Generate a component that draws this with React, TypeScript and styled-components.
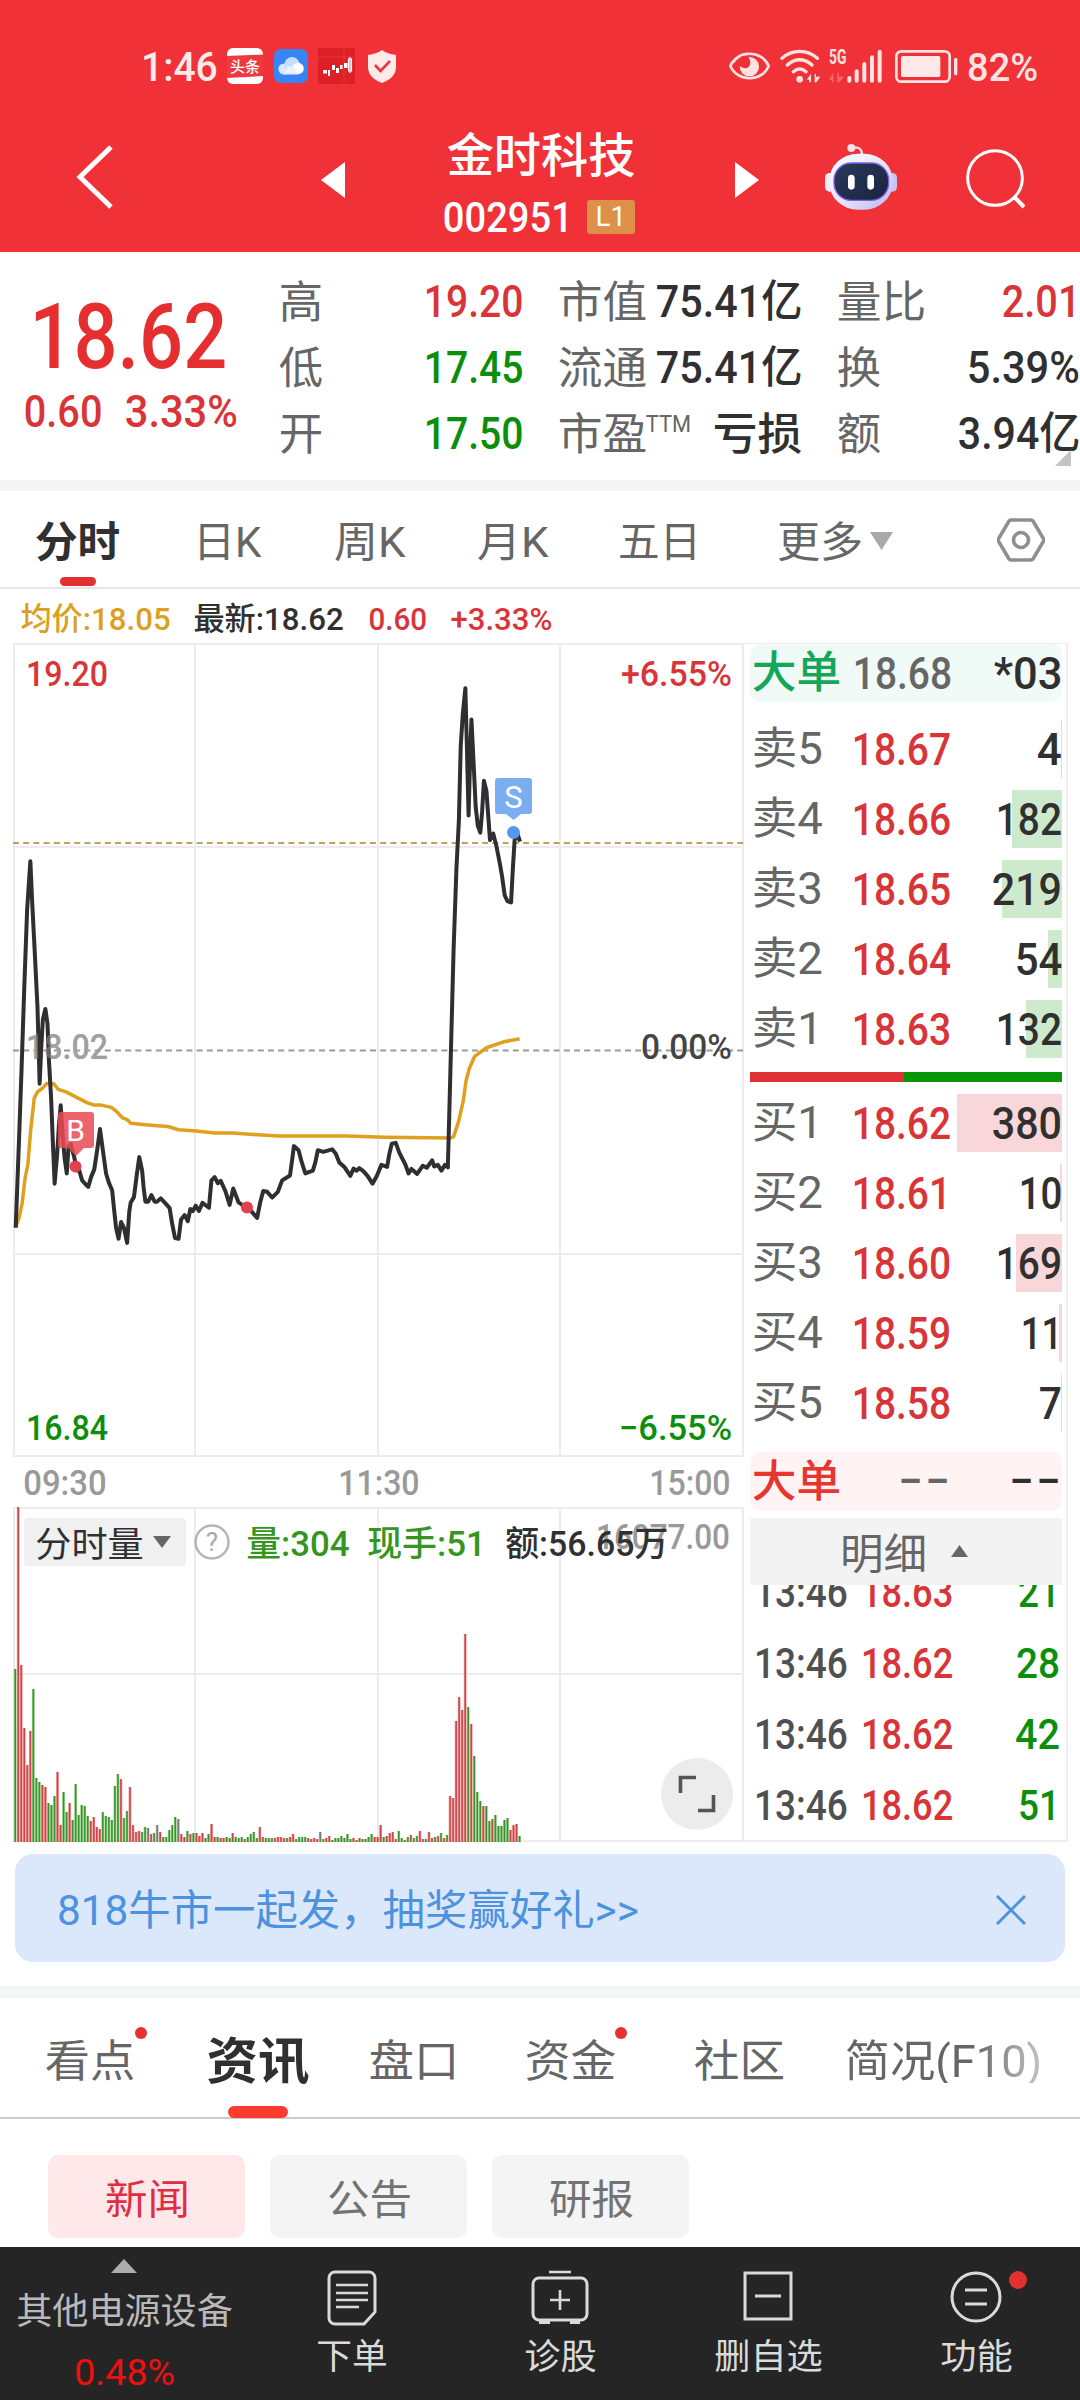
import React, { useLayoutEffect, useRef, useState } from "react";
import styled, { createGlobalStyle, css } from "styled-components";

const RED = "#d93438";
const GREEN = "#0b8f0b";
const DARK = "#303030";
const GREY = "#666666";

const Global = createGlobalStyle`
  * { box-sizing: border-box; }
  body { margin: 0; background: #fff; }
  svg { display: block; flex: none; }
`;

/* ---------- text fitted to the width of the condensed display face ---------- */

const FitBox = styled.span<{ $w: number; $ml: number; $size: number; $c: string; $wt: number; $dy: number }>`
  display: block;
  flex: none;
  width: ${(p) => p.$w}px;
  height: ${(p) => p.$size}px;
  margin-left: ${(p) => p.$ml}px;
  padding-top: ${(p) => p.$dy}px;
  font-family: Roboto, "Noto Sans CJK SC", sans-serif;
  font-size: ${(p) => p.$size}px;
  line-height: ${(p) => p.$size}px;
  font-weight: ${(p) => p.$wt};
  color: ${(p) => p.$c};
`;
const FitInner = styled.span`
  display: inline-block;
  white-space: pre;
  vertical-align: top;
  transform-origin: 0 50%;
`;

type FitProps = {
  w: number;
  s: number;
  c?: string;
  wt?: number;
  ml?: number;
  dy?: number;
  children: string;
};

function Fit({ w, s, c = DARK, wt = 400, ml = 0, dy = 0, children }: FitProps) {
  const ref = useRef<HTMLSpanElement>(null);
  const [k, setK] = useState(1);
  const pad = s * 0.05;
  useLayoutEffect(() => {
    if (ref.current) setK((w + pad * 2) / ref.current.offsetWidth);
  }, [w, pad, children]);
  return (
    <FitBox $w={w} $ml={ml} $size={s} $c={c} $wt={wt} $dy={dy}>
      <FitInner ref={ref} style={{ transform: `translateX(${-pad}px) scaleX(${k})` }}>
        {children}
      </FitInner>
    </FitBox>
  );
}

/* ---------- layout parts ---------- */

const Page = styled.div`
  width: 1080px;
  height: 2400px;
  display: flex;
  flex-direction: column;
  overflow: hidden;
  background: #fff;
`;
const Header = styled.header`
  height: 252px;
  background: #f03238;
`;
const StatusBar = styled.div`
  height: 132px;
  display: flex;
  align-items: center;
  justify-content: space-between;
  padding: 0 44px 0 143px;
`;
const StatusGroup = styled.div`
  display: flex;
  align-items: center;
`;
const NavBar = styled.nav`
  height: 120px;
  padding: 0 54px 0 76px;
  display: flex;
  align-items: flex-start;
`;
const NavIcon = styled.div<{ $ml: number; $top: number }>`
  margin: ${(p) => p.$top}px 0 0 ${(p) => p.$ml}px;
`;
const TitleBlock = styled.div`
  width: 390px;
  display: flex;
  flex-direction: column;
  align-items: center;
`;
const CodeRow = styled.div`
  display: flex;
  align-items: center;
  margin-top: 19px;
  height: 38px;
`;
const Badge = styled.div`
  display: flex;
  align-items: center;
  width: 48px;
  height: 34px;
  margin-left: 16px;
  background: #de904a;
  border-radius: 3px;
`;

const Quote = styled.section`
  height: 228px;
  display: flex;
  align-items: flex-start;
  position: relative;
`;
const PriceBlock = styled.div`
  width: 281px;
  padding-top: 39px;
`;
const SubPrice = styled.div`
  display: flex;
  margin-top: 9px;
`;
const StatCol = styled.div<{ $w: number; $ml: number }>`
  flex: none;
  width: ${(p) => p.$w}px;
  margin-left: ${(p) => p.$ml}px;
  padding-top: 16px;
`;
const StatRow = styled.div`
  height: 66px;
  display: flex;
  align-items: center;
  justify-content: space-between;
`;
const StatLabel = styled.div`
  display: flex;
  align-items: center;
`;
const Sup = styled.div`
  padding-bottom: 18px;
  margin-left: 2px;
`;
const Fold = styled.i`
  position: absolute;
  right: 9px;
  bottom: 14px;
  width: 16px;
  height: 16px;
  background: #c4c4c4;
  clip-path: polygon(100% 0, 100% 100%, 0 100%);
`;
const Band = styled.div<{ $h: number }>`
  flex: none;
  height: ${(p) => p.$h}px;
  background: #f4f5f5;
`;

const PeriodTabs = styled.div`
  height: 98px;
  border-bottom: 2px solid #e8e8e8;
  display: flex;
  align-items: center;
  padding: 6px 0 0 37px;
`;
const ActiveTab = styled.div<{ $w: number; $h: number; $drop: number; $bg: string; $x: number }>`
  position: relative;
  &::after {
    content: "";
    position: absolute;
    left: ${(p) => p.$x}px;
    top: ${(p) => p.$drop}px;
    width: ${(p) => p.$w}px;
    height: ${(p) => p.$h}px;
    border-radius: ${(p) => p.$h / 2}px;
    background: ${(p) => p.$bg};
  }
`;
const InfoRow = styled.div`
  height: 54px;
  display: flex;
  align-items: center;
  padding: 6px 0 0 21px;
`;

const Market = styled.section`
  height: 1199px;
  display: flex;
  padding-left: 13px;
`;
const ChartCol = styled.div`
  width: 731px;
`;
const TimeAxis = styled.div`
  height: 50px;
  display: flex;
  align-items: center;
  padding: 2px 0 0 12px;
`;
const VolumePane = styled.div`
  position: relative;
  height: 335px;
`;
const VolumeHead = styled.div`
  position: absolute;
  left: 11px;
  top: 11px;
  height: 48px;
  display: flex;
  align-items: center;
`;
const Picker = styled.div`
  width: 162px;
  height: 48px;
  padding-left: 13px;
  display: flex;
  align-items: center;
  background: #f0f0f0;
  border-radius: 4px;
`;
const ExpandButton = styled.div`
  position: absolute;
  left: 648px;
  top: 251px;
  width: 72px;
  height: 72px;
  border-radius: 50%;
  background: #ececec;
  display: flex;
  align-items: center;
  justify-content: center;
`;

const Book = styled.div`
  width: 324px;
  border: 2px solid #eeeeee;
  border-left: 0;
  border-top-width: 1px;
  padding-left: 6px;
  padding-right: 4px;
  display: flex;
  flex-direction: column;
`;
const cells = css`
  display: flex;
  align-items: center;
  padding-left: 4px;
`;
const BigOrder = styled.div<{ $bg: string; $h: number }>`
  ${cells}
  flex: none;
  height: ${(p) => p.$h}px;
  background: ${(p) => p.$bg};
  border-radius: 10px;
`;
const Level = styled.div`
  ${cells}
  flex: none;
  position: relative;
  height: 70px;
`;
const Depth = styled.i<{ $w: number; $bg: string }>`
  position: absolute;
  right: 0;
  top: 6px;
  height: 58px;
  width: ${(p) => p.$w}px;
  background: ${(p) => p.$bg};
`;
const Right = styled.div<{ $pad?: number }>`
  position: relative;
  flex: 1;
  display: flex;
  justify-content: flex-end;
  padding-right: ${(p) => p.$pad ?? 2}px;
`;
const SellSide = styled.div`
  padding-top: 12px;
`;
const BuySide = styled.div`
  padding: 5px 0 14px;
`;
const Ratio = styled.div`
  flex: none;
  display: flex;
  height: 10px;
  margin-top: 8px;
  margin-bottom: 1px;
  background: #069606;
  &::before {
    content: "";
    width: 49.4%;
    background: #e03035;
  }
`;
const DetailBar = styled.div`
  flex: none;
  height: 67px;
  margin-top: 7px;
  background: #f3f3f4;
  display: flex;
  align-items: center;
  padding: 6px 0 0 92px;
`;
const Ticks = styled.div`
  height: 254px;
  overflow: hidden;
`;
const TickList = styled.div`
  margin-top: -28px;
`;
const Tick = styled.div`
  ${cells}
  padding-left: 6px;
  height: 71px;
`;

const BannerWrap = styled.div`
  height: 144px;
  padding: 12px 15px 0;
`;
const Banner = styled.div`
  height: 108px;
  border-radius: 18px;
  background: #dbe8fb;
  display: flex;
  align-items: center;
  justify-content: space-between;
  padding: 4px 39px 0 43px;
`;
const NewsTabs = styled.div`
  height: 121px;
  border-bottom: 2px solid #cbcbcb;
  display: flex;
  align-items: center;
  padding: 6px 0 0 47px;
`;
const Dotted = styled.div<{ $x: number; $y: number; $d: number }>`
  position: relative;
  &::after {
    content: "";
    position: absolute;
    left: ${(p) => p.$x}px;
    top: ${(p) => p.$y}px;
    width: ${(p) => p.$d}px;
    height: ${(p) => p.$d}px;
    border-radius: 50%;
    background: #e2312f;
  }
`;
const Faded = styled.div`
  mask-image: linear-gradient(90deg, #000 65%, rgba(0, 0, 0, 0.4));
`;
const Chips = styled.div`
  height: 128px;
  display: flex;
  gap: 25px;
  padding: 36px 0 0 48px;
`;
const Chip = styled.div<{ $on?: boolean }>`
  width: 197px;
  height: 83px;
  padding-top: 6px;
  border-radius: 10px;
  display: flex;
  align-items: center;
  justify-content: center;
  background: ${(p) => (p.$on ? "#fee8ea" : "#f4f4f4")};
`;
const BottomBar = styled.footer`
  flex: none;
  height: 153px;
  background: #252525;
  display: flex;
`;
const Sector = styled.div`
  width: 248px;
  padding-top: 12px;
  display: flex;
  flex-direction: column;
  align-items: center;
`;
const Action = styled.div<{ $w: number }>`
  width: ${(p) => p.$w}px;
  padding-top: 23px;
  display: flex;
  flex-direction: column;
  align-items: center;
`;
const ActionIcon = styled.div`
  height: 70px;
`;

/* ---------- data ---------- */

const volume =
  "173g 335r 177r 114r 77r 111r 153g 64g 60g 57r 55r 39g 37g 46g 70r 17r 50g 30g 39r 22g 58g 27g 37g 36g 26g 21r 25r 15r 13r 30g 26g 25g 22g 56g 68g 63r 24g 31g 55r 17r 10r 11r 10g 15g 14x 8r 9g 17x 10r 5g 5g 12g 17g 25g 23x 8r 5r 11g 8r 9g 9r 6r 9r 4g 8g 18r 5r 5g 4r 4r 5g 4g 9r 5g 4g 5g 3r 5g 8g 10g 4g 15r 5r 4g 4g 4g 4r 5r 5r 4r 4g 5r 8r 3g 5g 5g 5g 4r 3r 4r 3r 10x 3g 4r 6r 2g 4g 4g 6g 4g 8g 3g 4r 2g 4r 3g 3g 5g 8g 5r 5r 17r 5g 6r 9r 10r 3r 11g 4g 2g 5g 7r 4g 6g 11r 3r 3g 10r 4r 5g 6r 9g 4r 7g 46r 44r 121r 145r 132r 208r 135g 118r 86g 50g 41g 36r 36g 21g 23r 27g 16g 16g 22g 24g 12r 17r 18r 6g"
    .split(" ")
    .map((t) => ({ h: parseInt(t, 10), k: t.slice(-1) }));

const barColor: Record<string, [string, string]> = {
  g: ["#3d8f33", "#9bd68c"],
  r: ["#c8474b", "#f49a9a"],
  x: ["#777777", "#bbbbbb"],
};

const pricePts =
  "44,1440 53,1230 60,1060 68,850 76,660 85,542 90,640 97,760 105,900 111,1087 116,990 120,930 127,904 133,940 137,1030 143,1120 148,1230 153,1332 160,1260 165,1190 170,1140 176,1220 181,1270 187,1307 192,1240 198,1235 208,1268 216,1300 222,1300 230,1324 240,1334 247,1340 255,1316 264,1297 272,1250 280,1198 288,1250 297,1307 305,1330 314,1348 320,1400 325,1440 332,1467 339,1426 347,1440 356,1477 362,1400 366,1378 375,1365 383,1310 390,1267 398,1300 402,1340 407,1376 415,1376 424,1360 433,1376 440,1376 450,1368 462,1379 475,1392 482,1430 490,1465 500,1467 507,1420 517,1409 526,1424 533,1394 540,1399 548,1386 557,1399 567,1379 585,1391 592,1324 601,1316 610,1331 618,1325 631,1350 643,1384 653,1344 668,1378 680,1385 692,1385 704,1400 720,1416 728,1380 737,1350 748,1352 762,1366 778,1352 790,1324 812,1312 817,1280 823,1240 836,1250 845,1280 855,1307 876,1300 883,1280 890,1250 905,1254 930,1248 940,1258 950,1280 965,1292 981,1313 990,1295 998,1300 1006,1294 1018,1302 1030,1314 1043,1332 1055,1313 1068,1286 1084,1291 1090,1260 1097,1234 1108,1232 1118,1256 1135,1285 1144,1307 1152,1296 1168,1308 1184,1288 1195,1293 1210,1275 1216,1290 1226,1286 1236,1300 1246,1286 1254,1292 1258,1160 1264,960 1270,760 1278,560 1285,440 1290,260 1296,180 1303,118 1307,250 1312,430 1316,300 1320,195 1326,300 1332,410 1338,456 1345,472 1350,420 1355,345 1362,370 1367,430 1372,490 1381,474 1390,505 1400,550 1406,580 1413,625 1421,640 1431,643 1436,560 1441,490 1449,475 1456,494";
const avgPts =
  "44,1438 54,1414 62,1380 70,1320 78,1285 86,1200 96,1122 106,1106 118,1099 130,1087 150,1087 163,1101 185,1107 220,1123 245,1134 262,1139 280,1139 312,1145 326,1155 342,1170 356,1175 366,1184 400,1187 440,1190 470,1192 500,1200 550,1203 600,1208 650,1208 700,1211 780,1215 970,1215 1080,1218 1262,1220 1270,1217 1284,1180 1297,1130 1305,1080 1314,1050 1329,1020 1362,999 1408,985 1455,977";

const sells: [string, string, number, number][] = [
  ["卖5", "18.67", 21, 1],
  ["卖4", "18.66", 62, 50],
  ["卖3", "18.65", 66, 60],
  ["卖2", "18.64", 43, 14],
  ["卖1", "18.63", 62, 36],
];
const sellVol = ["4", "182", "219", "54", "132"];
const buys: [string, string, number, number][] = [
  ["买1", "18.62", 66, 105],
  ["买2", "18.61", 39, 2],
  ["买3", "18.60", 62, 46],
  ["买4", "18.59", 37, 3],
  ["买5", "18.58", 19, 1],
];
const buyVol = ["380", "10", "169", "11", "7"];
const ticks: [string, string, number][] = [
  ["18.63", "21", 38],
  ["18.62", "28", 40],
  ["18.62", "42", 41],
  ["18.62", "51", 38],
];

/* ---------- icons ---------- */

const AppToutiao = () => (
  <svg width="36" height="36" viewBox="0 0 36 36">
    <rect width="36" height="36" rx="6" fill="#fff" />
    <path d="M0 8 36 6.500V28L0 30Z" fill="#ee3a3f" />
    <text x="18" y="24" fontSize="15" fontWeight="500" fill="#fff" textAnchor="middle" fontFamily="Noto Sans CJK SC, sans-serif">头条</text>
  </svg>
);
const AppCloud = () => (
  <svg width="34" height="34" viewBox="0 0 34 34">
    <rect width="34" height="34" rx="7" fill="#3784f5" />
    <circle cx="10" cy="20" r="5.600" fill="#d7e8fe" />
    <circle cx="18" cy="15.500" r="7.500" fill="#c5defd" />
    <circle cx="24" cy="19.500" r="5.800" fill="#fff" />
    <path d="M10 25.500H24L20 18 14 17Z" fill="#e8f2ff" />
  </svg>
);
const AppCandles = () => (
  <svg width="37" height="36" viewBox="0 0 37 36">
    <rect width="37" height="36" fill="#dd1f26" />
    <path d="M0 9H37M26 0V36" stroke="#e94b50" strokeWidth=".6" />
    <g fill="#fff">
      <rect x="5" y="22" width="4" height="3.500" />
      <rect x="10" y="22" width="2" height="6" />
      <rect x="14" y="17" width="3" height="5" />
      <rect x="18" y="20" width="3" height="5" />
      <rect x="22" y="17" width="2.500" height="4" />
      <rect x="26" y="15" width="3.500" height="5" />
    </g>
    <path d="M30.500 11h3v12h-3zM32 9v16" fill="none" stroke="#fff" strokeWidth="1.200" />
  </svg>
);
const Shield = () => (
  <svg width="28" height="33" viewBox="0 0 28 33">
    <path d="M14 0C18 3 22 4 28 5V17c0 8-6 13-14 16C6 30 0 25 0 17V5C6 4 10 3 14 0Z" fill="#ffe9e9" />
    <path d="m7 15 5.500 6L22 11" fill="none" stroke="#e8383d" strokeWidth="2.600" />
  </svg>
);
const Eye = () => (
  <svg width="41" height="28" viewBox="87 49 123 84">
    <path d="M91 91C112 42 186 42 206 91C186 140 112 140 91 91Z" fill="none" stroke="#ffe3e3" strokeWidth="8" />
    <circle cx="148" cy="93" r="29" fill="#ffe3e3" />
    <path d="M112 90L124 60 143 62C153 74 153 86 146 94C138 100 128 98 119 92Z" fill="#f03238" />
    <path d="M100 80C112 62 126 55 142 54" fill="none" stroke="#ffe3e3" strokeWidth="7" />
  </svg>
);
const Wifi = () => (
  <svg width="41" height="34" viewBox="240 37 123 102">
    <g fill="none" stroke="#ffe3e3" strokeWidth="10" strokeLinecap="round">
      <path d="M246 65C276 37 322 37 352 65" />
      <path d="M262 85C284 64 314 64 336 85" />
      <path d="M280 105C292 95 306 95 318 105" />
    </g>
    <circle cx="299" cy="128" r="10" fill="#ffe3e3" />
    <path d="M320 129 333 112V137H328V129ZM344 137V112H348V120H361L349 137Z" fill="#ffe3e3" />
  </svg>
);
const Signal = () => (
  <svg width="53" height="34" viewBox="388 37 159 102">
    <text x="388" y="83" fontSize="62" fontWeight="700" textLength="52" lengthAdjust="spacingAndGlyphs" fill="#ffe3e3" fontFamily="Roboto, sans-serif">5G</text>
    <path d="M388 129 401 108V137H397V129ZM413 137V108H417V120H433L418 137Z" fill="#f6696d" />
    <g stroke="#ffe3e3" strokeWidth="12" strokeLinecap="round">
      <path d="M449 124V132M471 104V132M494 82V132M517 62V132M540 45V132" />
    </g>
  </svg>
);
const Battery = () => (
  <svg width="63" height="33" viewBox="585 42 189 99">
    <rect x="589" y="46" width="160" height="91" rx="15" fill="none" stroke="#ffe3e3" strokeWidth="8" />
    <rect x="603" y="60" width="118" height="63" rx="5" fill="#ffe8e8" />
    <path d="M767 70V113" stroke="#ffe3e3" strokeWidth="10" strokeLinecap="round" />
  </svg>
);
const Robot = () => (
  <svg width="72" height="66" viewBox="375 327 216 198">
    <defs>
      <linearGradient id="shell" x1="0" y1="0" x2="1" y2="1">
        <stop offset="0" stopColor="#ffffff" />
        <stop offset=".55" stopColor="#e6e4fb" />
        <stop offset="1" stopColor="#b9b6ee" />
      </linearGradient>
      <linearGradient id="visor" x1="0" y1="0" x2="1" y2="1">
        <stop offset="0" stopColor="#2a3a5c" />
        <stop offset="1" stopColor="#18233f" />
      </linearGradient>
    </defs>
    <path d="M454 338C478 334 487 344 486 362" fill="none" stroke="#fbe3ee" strokeWidth="7" />
    <circle cx="454" cy="339" r="12" fill="#fbe0e8" />
    <rect x="375" y="414" width="34" height="56" rx="14" fill="#eceafb" />
    <rect x="557" y="414" width="34" height="56" rx="14" fill="#c9c5f3" />
    <rect x="388" y="356" width="190" height="168" rx="86" ry="80" fill="url(#shell)" />
    <rect x="402" y="384" width="164" height="112" rx="52" fill="url(#visor)" stroke="#7f5fe6" strokeWidth="4" />
    <rect x="444" y="419" width="20" height="45" rx="10" fill="#fff" />
    <rect x="502" y="419" width="20" height="45" rx="10" fill="#fff" />
  </svg>
);
const Tri = ({ d, w, h, c }: { d: string; w: number; h: number; c: string }) => (
  <svg width={w} height={h} viewBox={`0 0 ${w} ${h}`}>
    <path d={d} fill={c} />
  </svg>
);

/* ---------- charts ---------- */

const PlotText = ({ x, y, w, c, children }: { x: number; y: number; w: number; c: string; children: string }) => (
  <text x={x} y={y} fontSize="35" fontWeight="500" fill={c} textLength={w} lengthAdjust="spacingAndGlyphs" fontFamily="Roboto, sans-serif">
    {children}
  </text>
);

const PriceChart = () => (
  <svg width="731" height="814" viewBox="0 0 731 814">
    <g stroke="#ececec" strokeWidth="2">
      <path d="M0 1H731M0 813H731M0 204H731M0 611H731M1 0V814M182 0V814M365 0V814M547 0V814M730 0V814" />
    </g>
    <path d="M0 200H731" stroke="#c2a15c" strokeWidth="2" strokeDasharray="6 4.200" />
    <path d="M0 407.500H731" stroke="#9a9a9a" strokeWidth="2" strokeDasharray="6 4.200" />
    <PlotText x={13} y={416} w={82} c="#999">18.02</PlotText>
    <g transform="translate(-13 -3) scale(.35714 .40816)" fill="none" strokeLinejoin="round">
      <polyline points={avgPts} stroke="#dfa01e" strokeWidth="3.500" vectorEffect="non-scaling-stroke" />
      <polyline points={pricePts} stroke="#2f2f31" strokeWidth="4" vectorEffect="non-scaling-stroke" />
    </g>
    <g opacity=".45">
      <PlotText x={13} y={416} w={82} c="#aaa">18.02</PlotText>
    </g>
    <g fill="#e2414b">
      <circle cx="62.500" cy="523.500" r="6" />
      <circle cx="234" cy="564.500" r="6" />
    </g>
    <path d="M48 469H78a3 3 0 0 1 3 3V502a3 3 0 0 1-3 3H71L63 513L55 505H48a3 3 0 0 1-3-3V472a3 3 0 0 1 3-3Z" fill="#ea4a52" fillOpacity=".85" />
    <text x="62.500" y="498" fontSize="30" fill="#fff" textAnchor="middle" fontFamily="Roboto, sans-serif">B</text>
    <circle cx="500.500" cy="189.500" r="6.500" fill="#5597ec" />
    <path d="M485 135H516a3 3 0 0 1 3 3V168a3 3 0 0 1-3 3H508L500.500 177L493 171H485a3 3 0 0 1-3-3V138a3 3 0 0 1 3-3Z" fill="#7badf3" />
    <text x="500.500" y="165" fontSize="31" fill="#fff" textAnchor="middle" fontFamily="Roboto, sans-serif">S</text>
    <PlotText x={13} y={43} w={82} c={RED}>19.20</PlotText>
    <PlotText x={608} y={43} w={111} c={RED}>+6.55%</PlotText>
    <PlotText x={628} y={416} w={91} c="#444">0.00%</PlotText>
    <PlotText x={13} y={797} w={82} c={GREEN}>16.84</PlotText>
    <PlotText x={606} y={797} w={113} c={GREEN}>−6.55%</PlotText>
  </svg>
);

const VolumeChart = () => (
  <svg width="731" height="335" viewBox="0 0 731 335">
    <path d="M0 1H731M0 167H731M0 334H731M1 0V335M182 0V335M365 0V335M547 0V335M730 0V335" stroke="#ececec" strokeWidth="2" />
    {volume.map((b, i) => (
      <g key={i}>
        <rect x={0.8 + i * 3.02} y={335 - b.h} width="2.800" height={b.h} fill={barColor[b.k][1]} />
        <rect x={1.5 + i * 3.02} y={335 - b.h} width="1.500" height={b.h} fill={barColor[b.k][0]} />
      </g>
    ))}
    <PlotText x={583} y={42} w={134} c="#999">16077.00</PlotText>
  </svg>
);

/* ---------- order book ---------- */

const LevelRow = ({ row, vol, tint }: { row: [string, string, number, number]; vol: string; tint: string }) => (
  <Level>
    <Depth $w={row[3]} $bg={tint} />
    <Fit s={44} w={67} c={GREY}>{row[0]}</Fit>
    <Fit s={45} w={95} ml={33} c={RED} wt={500}>{row[1]}</Fit>
    <Right>
      <Fit s={45} w={row[2]} c={DARK} wt={500}>{vol}</Fit>
    </Right>
  </Level>
);

export default function App() {
  return (
    <Page>
      <Global />
      <Header>
        <StatusBar>
          <StatusGroup>
            <Fit s={41} w={73} c="#ffe9e9" wt={500} dy={1}>1:46</Fit>
            <NavIcon $ml={11} $top={0}><AppToutiao /></NavIcon>
            <NavIcon $ml={11} $top={0}><AppCloud /></NavIcon>
            <NavIcon $ml={10} $top={0}><AppCandles /></NavIcon>
            <NavIcon $ml={13} $top={0}><Shield /></NavIcon>
          </StatusGroup>
          <StatusGroup>
            <Eye />
            <NavIcon $ml={10} $top={0}><Wifi /></NavIcon>
            <NavIcon $ml={8} $top={0}><Signal /></NavIcon>
            <NavIcon $ml={13} $top={0}><Battery /></NavIcon>
            <Fit s={38} w={67} ml={11} c="#ffe3e3" wt={500} dy={2}>82%</Fit>
          </StatusGroup>
        </StatusBar>
        <NavBar>
          <NavIcon $ml={0} $top={13}>
            <svg width="40" height="64" viewBox="0 0 40 64">
              <path d="M35 2 4 32 35 62" fill="none" stroke="#fff" strokeWidth="5" />
            </svg>
          </NavIcon>
          <NavIcon $ml={205} $top={30}><Tri w={24} h={36} d="M24 0V36L0 18Z" c="#fff" /></NavIcon>
          <TitleBlock>
            <Fit s={47} w={184} ml={1} c="#fff" wt={500}>金时科技</Fit>
            <CodeRow>
              <Fit s={43} w={126} c="#fff" wt={500}>002951</Fit>
              <Badge><Fit s={28} w={28} ml={10} c="#fff">L1</Fit></Badge>
            </CodeRow>
          </TitleBlock>
          <NavIcon $ml={0} $top={30}><Tri w={24} h={36} d="M0 0V36L24 18Z" c="#fff" /></NavIcon>
          <NavIcon $ml={66} $top={12}><Robot /></NavIcon>
          <NavIcon $ml={69} $top={17}>
            <svg width="60" height="60" viewBox="797 344 180 180">
              <ellipse cx="884" cy="431" rx="82" ry="82" fill="none" stroke="#fff" strokeWidth="9" />
              <path d="M940 486 971 518" stroke="#fff" strokeWidth="12" />
            </svg>
          </NavIcon>
        </NavBar>
      </Header>

      <Quote>
        <PriceBlock>
          <Fit s={90} w={189} ml={34} c="#e52e2f" wt={500} dy={2}>18.62</Fit>
          <SubPrice>
            <Fit s={44} w={74} ml={26} c={RED} wt={500}>0.60</Fit>
            <Fit s={44} w={109} ml={27} c={RED} wt={500}>3.33%</Fit>
          </SubPrice>
        </PriceBlock>
        <StatCol $w={240} $ml={0}>
          <StatRow><Fit s={44} w={40} c={GREY} dy={2}>高</Fit><Fit s={44} w={95} c={RED} wt={500} dy={1}>19.20</Fit></StatRow>
          <StatRow><Fit s={44} w={40} c={GREY} dy={2}>低</Fit><Fit s={44} w={95} c={GREEN} wt={500} dy={1}>17.45</Fit></StatRow>
          <StatRow><Fit s={44} w={40} c={GREY} dy={2}>开</Fit><Fit s={44} w={95} c={GREEN} wt={500} dy={1}>17.50</Fit></StatRow>
        </StatCol>
        <StatCol $w={240} $ml={39}>
          <StatRow><Fit s={44} w={85} c={GREY} dy={2}>市值</Fit><Fit s={44} w={142} wt={500} dy={1}>75.41亿</Fit></StatRow>
          <StatRow><Fit s={44} w={85} c={GREY} dy={2}>流通</Fit><Fit s={44} w={142} wt={500} dy={1}>75.41亿</Fit></StatRow>
          <StatRow>
            <StatLabel>
              <Fit s={44} w={85} c={GREY} dy={2}>市盈</Fit>
              <Sup><Fit s={24} w={43} c={GREY}>TTM</Fit></Sup>
            </StatLabel>
            <Fit s={44} w={85} wt={500} dy={2}>亏损</Fit>
          </StatRow>
        </StatCol>
        <StatCol $w={239} $ml={39}>
          <StatRow><Fit s={44} w={85} c={GREY} dy={2}>量比</Fit><Fit s={44} w={74} c={RED} wt={500} dy={1}>2.01</Fit></StatRow>
          <StatRow><Fit s={44} w={40} c={GREY} dy={2}>换</Fit><Fit s={44} w={109} wt={500} dy={1}>5.39%</Fit></StatRow>
          <StatRow><Fit s={44} w={40} c={GREY} dy={2}>额</Fit><Fit s={44} w={118} wt={500} dy={1}>3.94亿</Fit></StatRow>
        </StatCol>
        <Fold />
      </Quote>
      <Band $h={11} />

      <PeriodTabs>
        <ActiveTab $w={36} $h={9} $drop={56} $x={23} $bg="#e0302f">
          <Fit s={42} w={81} wt={700} dy={1}>分时</Fit>
        </ActiveTab>
        <Fit s={42} w={64} ml={77} c={GREY} dy={1}>日K</Fit>
        <Fit s={42} w={67} ml={77} c={GREY} dy={1}>周K</Fit>
        <Fit s={42} w={67} ml={76} c={GREY} dy={1}>月K</Fit>
        <Fit s={42} w={79} ml={74} c={GREY} dy={1}>五日</Fit>
        <Fit s={42} w={82} ml={80} c={GREY} dy={1}>更多</Fit>
        <NavIcon $ml={9} $top={-2}><Tri w={23} h={18} d="M0 0H23L11.500 18Z" c="#a9a9a9" /></NavIcon>
        <NavIcon $ml={104} $top={-4}>
          <svg width="48" height="46" viewBox="0 0 48 46">
            <path d="M14 3H34a3 3 0 0 1 2 1L46 21a3 3 0 0 1 0 4L36 42a3 3 0 0 1-2 1H14a3 3 0 0 1-2-1L2 25a3 3 0 0 1 0-4L12 4a3 3 0 0 1 2-1Z" fill="none" stroke="#8f8f8f" strokeWidth="3.600" />
            <circle cx="24" cy="23" r="7.500" fill="none" stroke="#8f8f8f" strokeWidth="3.600" />
          </svg>
        </NavIcon>
      </PeriodTabs>
      <InfoRow>
        <Fit s={32} w={147} ml={1} c="#dba021" wt={500}>均价:18.05</Fit>
        <Fit s={32} w={147} ml={26} wt={500}>最新:18.62</Fit>
        <Fit s={32} w={55} ml={28} c={RED} wt={500}>0.60</Fit>
        <Fit s={32} w={99} ml={27} c={RED} wt={500}>+3.33%</Fit>
      </InfoRow>

      <Market>
        <ChartCol>
          <PriceChart />
          <TimeAxis>
            <Fit s={35} w={80} c="#999" wt={500}>09:30</Fit>
            <Fit s={35} w={78} ml={235} c="#999" wt={500}>11:30</Fit>
            <Fit s={35} w={78} ml={233} c="#999" wt={500}>15:00</Fit>
          </TimeAxis>
          <VolumePane>
            <VolumeChart />
            <VolumeHead>
              <Picker>
                <Fit s={35} w={105} dy={3}>分时量</Fit>
                <NavIcon $ml={11} $top={0}><Tri w={18} h={12} d="M0 0H18L9 12Z" c="#666" /></NavIcon>
              </Picker>
              <NavIcon $ml={8} $top={0}>
                <svg width="36" height="36" viewBox="0 0 36 36">
                  <circle cx="18" cy="18" r="16.500" fill="none" stroke="#b5b5b5" strokeWidth="2.500" />
                  <text x="18" y="27" fontSize="26" fill="#a8a8a8" textAnchor="middle" fontFamily="Roboto, sans-serif">?</text>
                </svg>
              </NavIcon>
              <Fit s={35} w={100} ml={18} c="#36951f" wt={500} dy={2}>量:304</Fit>
              <Fit s={35} w={115} ml={21} c="#36951f" wt={500} dy={2}>现手:51</Fit>
              <Fit s={35} w={160} ml={23} wt={500} dy={2}>额:56.65万</Fit>
            </VolumeHead>
            <ExpandButton>
              <svg width="38" height="38" viewBox="0 0 38 38">
                <path d="M2.500 18V2.500H18M35.500 20V35.500H20" fill="none" stroke="#555" strokeWidth="3.600" />
              </svg>
            </ExpandButton>
          </VolumePane>
        </ChartCol>

        <Book>
          <BigOrder $bg="#f0faf6" $h={58}>
            <Fit s={44} w={85} c="#14a75a" wt={500}>大单</Fit>
            <Fit s={45} w={95} ml={16} c={GREY} wt={500}>18.68</Fit>
            <Right><Fit s={45} w={64} wt={500}>*03</Fit></Right>
          </BigOrder>
          <SellSide>
            {sells.map((r, i) => <LevelRow key={r[0]} row={r} vol={sellVol[i]} tint="#cdeacd" />)}
          </SellSide>
          <Ratio />
          <BuySide>
            {buys.map((r, i) => <LevelRow key={r[0]} row={r} vol={buyVol[i]} tint="#f8d6d9" />)}
          </BuySide>
          <BigOrder $bg="#fff3f3" $h={59}>
            <Fit s={44} w={85} c="#e8352f" wt={500}>大单</Fit>
            <Fit s={44} w={46} ml={62} c={GREY} wt={500}>{"–\u200a–"}</Fit>
            <Right $pad={4}><Fit s={44} w={46} wt={500}>{"–\u200a–"}</Fit></Right>
          </BigOrder>
          <DetailBar>
            <Fit s={42} w={83} c={GREY}>明细</Fit>
            <NavIcon $ml={26} $top={-8}><Tri w={17} h={12} d="M8.500 0 17 12H0Z" c="#666" /></NavIcon>
          </DetailBar>
          <Ticks>
            <TickList>
              {ticks.map(([p, v, w], i) => (
                <Tick key={i}>
                  <Fit s={42} w={90} c="#505050" wt={500}>13:46</Fit>
                  <Fit s={42} w={88} ml={17} c={RED} wt={500}>{p}</Fit>
                  <Right $pad={4}><Fit s={42} w={w} c={GREEN} wt={500}>{v}</Fit></Right>
                </Tick>
              ))}
            </TickList>
          </Ticks>
        </Book>
      </Market>

      <BannerWrap>
        <Banner>
          <Fit s={42} w={578} ml={1} c="#4d92de" dy={1}>818牛市一起发，抽奖赢好礼&gt;&gt;</Fit>
          <svg width="30" height="30" viewBox="0 0 30 30">
            <path d="M1 1 29 29M29 1 1 29" stroke="#4d92de" strokeWidth="3" />
          </svg>
        </Banner>
      </BannerWrap>
      <Band $h={12} />

      <NewsTabs>
        <Dotted $x={88} $y={-12} $d={12}><Fit s={44} w={86} c={GREY} dy={1}>看点</Fit></Dotted>
        <NavIcon $ml={76} $top={0}>
          <ActiveTab $w={60} $h={12} $drop={70} $x={19} $bg="#fb3a30">
            <Fit s={50} w={98} wt={700} dy={1}>资讯</Fit>
          </ActiveTab>
        </NavIcon>
        <Fit s={44} w={86} ml={64} c={GREY} dy={1}>盘口</Fit>
        <NavIcon $ml={70} $top={0}>
          <Dotted $x={88} $y={-12} $d={12}><Fit s={44} w={87} c={GREY} dy={1}>资金</Fit></Dotted>
        </NavIcon>
        <Fit s={44} w={87} ml={82} c={GREY} dy={1}>社区</Fit>
        <NavIcon $ml={64} $top={0}>
          <Faded><Fit s={44} w={193} c={GREY} dy={1}>简况(F10)</Fit></Faded>
        </NavIcon>
      </NewsTabs>
      <Chips>
        <Chip $on><Fit s={41} w={81} ml={1} c="#e02d42" dy={1}>新闻</Fit></Chip>
        <Chip><Fit s={41} w={81} ml={1} c="#737373" dy={1}>公告</Fit></Chip>
        <Chip><Fit s={41} w={81} ml={1} c="#737373" dy={1}>研报</Fit></Chip>
      </Chips>

      <BottomBar>
        <Sector>
          <Tri w={26} h={14} d="M13 0 26 14H0Z" c="#adadad" />
          <Fit s={36} w={213} ml={1} c="#b9b9b9" dy={21}>其他电源设备</Fit>
          <Fit s={37} w={97} c="#f01010" dy={45}>0.48%</Fit>
        </Sector>
        <Action $w={208}>
          <ActionIcon>
            <svg width="50" height="56" viewBox="0 0 50 56">
              <path d="M8 2H42a6 6 0 0 1 6 6V42L37 54H8a6 6 0 0 1-6-6V8a6 6 0 0 1 6-6Z" fill="none" stroke="#dadada" strokeWidth="3" />
              <path d="M9 15H41M9 23H41M9 30H41M9 37H32" stroke="#dadada" strokeWidth="2.600" />
            </svg>
          </ActionIcon>
          <Fit s={35} w={68} c="#dadada">下单</Fit>
        </Action>
        <Action $w={208}>
          <ActionIcon>
            <svg width="58" height="54" viewBox="0 0 58 54">
              <rect x="2" y="8" width="54" height="42" rx="6" fill="none" stroke="#dadada" strokeWidth="3" />
              <path d="M18 2H40M29 20V40M19 30H39" stroke="#dadada" strokeWidth="2.600" />
              <path d="M8 52H19M39 52H49" stroke="#dadada" strokeWidth="4" />
            </svg>
          </ActionIcon>
          <Fit s={35} w={69} c="#dadada">诊股</Fit>
        </Action>
        <Action $w={208}>
          <ActionIcon>
            <svg width="50" height="52" viewBox="0 0 50 52">
              <rect x="2" y="3" width="46" height="46" fill="none" stroke="#dadada" strokeWidth="3" />
              <path d="M12 26H38" stroke="#dadada" strokeWidth="3" />
            </svg>
          </ActionIcon>
          <Fit s={35} w={105} c="#dadada">删自选</Fit>
        </Action>
        <Action $w={208}>
          <ActionIcon>
            <Dotted $x={59} $y={1} $d={18}>
              <svg width="52" height="54" viewBox="0 0 52 54">
                <circle cx="26" cy="27" r="24" fill="none" stroke="#dadada" strokeWidth="3" />
                <path d="M15 20H37M15 34H37" stroke="#dadada" strokeWidth="3" />
              </svg>
            </Dotted>
          </ActionIcon>
          <Fit s={35} w={69} c="#dadada">功能</Fit>
        </Action>
      </BottomBar>
    </Page>
  );
}
